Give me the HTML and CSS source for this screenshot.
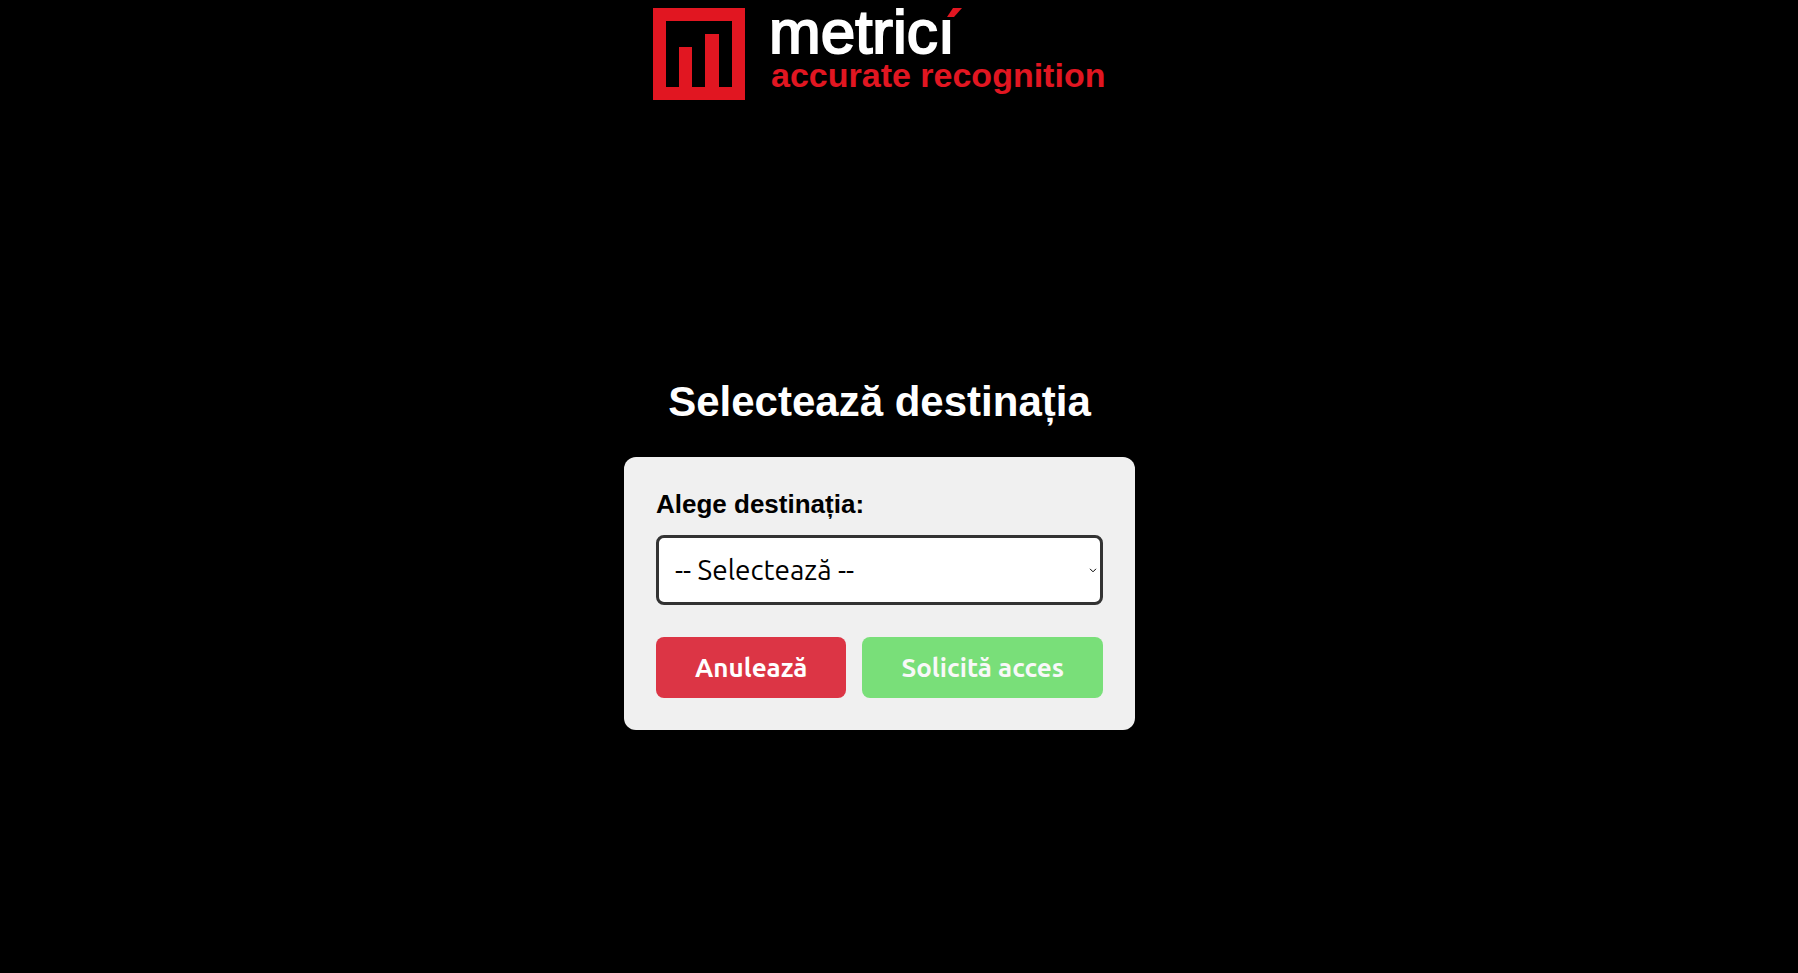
FILE: index.html
```html
<!DOCTYPE html>
<html lang="ro">
<head>
<meta charset="utf-8">
<meta name="viewport" content="width=device-width, initial-scale=1">
<title>Selectează destinația</title>
<link rel="stylesheet" href="styles.css">
</head>
<body class="page">
<header class="header">
<svg class="logo" width="454" height="92" viewBox="0 0 454 92" role="img" aria-label="metrici accurate recognition">
<path class="logo-mark" fill-rule="evenodd" d="M0 0H92V92H0ZM13 13V79H26V39H39V79H52V26H66V79H79V13Z"/>
<text class="logo-name" x="116" y="45">metricı</text>
<path class="logo-mark" d="M300 0H309L301 9H294Z"/>
<text class="logo-tagline" x="118" y="79">accurate recognition</text>
</svg>
</header>
<main class="main">
<h1 class="title">Selectează destinația</h1>
<form class="card">
<label class="label" for="destination">Alege destinația:</label>
<div class="field">
<select class="select" id="destination">
<option>-- Selectează --</option>
</select>
<svg class="chevron" width="8" height="5" viewBox="0 0 8 5" aria-hidden="true"><path d="M1 .8L4 3.8L7 .8"/></svg>
</div>
<div class="actions">
<button class="button button-cancel" type="button">Anulează</button>
<button class="button button-submit" type="submit" disabled>Solicită acces</button>
</div>
</form>
</main>
</body>
</html>
```
FILE: styles.css
```css
* {
  box-sizing: border-box;
}

.page {
  display: flex;
  flex-direction: column;
  min-height: 100vh;
  margin: 0;
  padding: 8px 39px 0 0;
  background: #000;
  font-family: "Liberation Sans", Arial, sans-serif;
}

.header {
  display: flex;
  justify-content: center;
}

.logo {
  display: block;
  max-width: 100%;
  overflow: visible;
}

.logo-mark {
  fill: #e11621;
}

.logo-name {
  fill: #fff;
  stroke: #fff;
  stroke-width: 2px;
  font-size: 62px;
}

.logo-tagline {
  fill: #e11621;
  font-size: 34px;
  font-weight: bold;
}

.main {
  display: flex;
  flex: 1;
  flex-direction: column;
  align-items: center;
  justify-content: center;
  padding-top: 35px;
}

.title {
  margin: 0 0 31px;
  color: #fff;
  font-size: 42px;
  line-height: 48px;
}

.card {
  display: flex;
  flex-direction: column;
  width: 100%;
  max-width: 511px;
  padding: 32px;
  border-radius: 12px;
  background: #f0f0f0;
}

.label {
  margin-bottom: 16px;
  color: #000;
  font-size: 26px;
  font-weight: bold;
  line-height: 30px;
}

.field {
  position: relative;
  margin-bottom: 32px;
}

.select {
  display: block;
  width: 100%;
  height: 70px;
  padding: 0 16px 2px;
  border: 3px solid #333;
  border-radius: 8px;
  appearance: none;
  background-color: #fff;
  color: #000;
  font-family: Ubuntu, "Noto Sans", sans-serif;
  font-size: 28px;
}

.chevron {
  position: absolute;
  top: 33px;
  right: 6px;
  fill: none;
  stroke: #000;
  stroke-width: 1px;
  pointer-events: none;
}

.actions {
  display: flex;
  gap: 16px;
}

.button {
  flex: 1 1 auto;
  padding: 16px 36px;
  border: 0;
  border-radius: 8px;
  color: #fff;
  font-family: Ubuntu, "Noto Sans", sans-serif;
  font-size: 26px;
  font-weight: 600;
  line-height: 29px;
  white-space: nowrap;
}

.button-cancel {
  background: #dc3545;
}

.button-submit {
  background: #79df79;
  color: #f8f8f8;
}
```
